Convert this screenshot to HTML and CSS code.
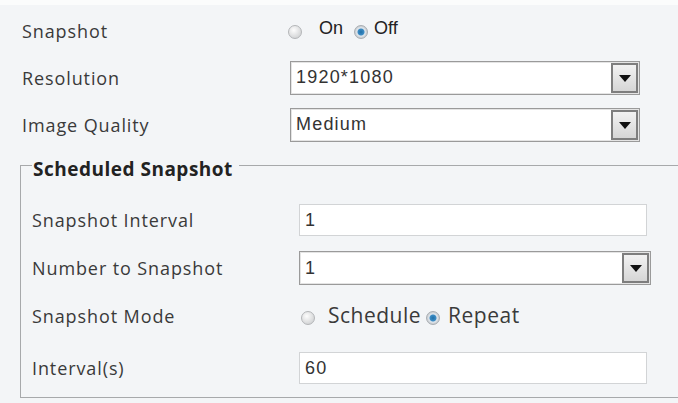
FILE: index.html
```html
<!doctype html>
<html lang="en">

<head>
  <meta charset="utf-8">
  <title>Snapshot</title>
  <link rel="stylesheet" href="styles.css">
</head>

<body>
  <div class="panel">
    <div class="row">
      <span class="label">Snapshot</span>
      <span class="radios plain">
        <span class="radio"></span><span class="opt on-opt">On</span>
        <span class="radio checked"></span><span class="opt">Off</span>
      </span>
    </div>
    <div class="row">
      <span class="label">Resolution</span>
      <span class="select"><span class="value">1920*1080</span><span class="arrow"></span></span>
    </div>
    <div class="row">
      <span class="label">Image Quality</span>
      <span class="select"><span class="value">Medium</span><span class="arrow"></span></span>
    </div>

    <fieldset class="group">
      <legend>Scheduled Snapshot</legend>
      <div class="row">
        <span class="label">Snapshot Interval</span>
        <span class="input"><span class="value">1</span></span>
      </div>
      <div class="row">
        <span class="label">Number to Snapshot</span>
        <span class="select wide"><span class="value">1</span><span class="arrow"></span></span>
      </div>
      <div class="row">
        <span class="label">Snapshot Mode</span>
        <span class="radios">
          <span class="radio"></span><span class="opt">Schedule</span>
          <span class="radio checked"></span><span class="opt">Repeat</span>
        </span>
      </div>
      <div class="row last">
        <span class="label">Interval(s)</span>
        <span class="input"><span class="value">60</span></span>
      </div>
    </fieldset>
  </div>
</body>

</html>
```

FILE: styles.css
```css
html { background-color:#f3f5f7; }
body { margin:0; border-top:5px solid #fbfcfc; font-family:"Open Sans",sans-serif; color:#3a3a3a; overflow:hidden; }
.panel { padding:2px 0 0 22px; }

.row { display:flex; align-items:center; height:47px; }
.label { width:268px; flex:none; font-size:18px; letter-spacing:.9px; }

.value { font-family:"Liberation Sans",Arial,sans-serif; font-size:18px; letter-spacing:1.2px; color:#333; padding-left:5px; flex:1; }

.select { display:flex; align-items:center; box-sizing:border-box; width:350px; height:34px; background:#fff; border:1px solid #9a9a9a; box-shadow:inset 0 0 0 1px #e4e4e4; }
.select.wide { width:352px; }
.arrow { position:relative; box-sizing:border-box; width:27px; height:30px; margin-right:1px; border:2px solid #7e7e7e; background:linear-gradient(#f2f2f2,#d6d6d6); }
.arrow:after { content:""; position:absolute; left:6px; top:10px; border-left:6px solid transparent; border-right:6px solid transparent; border-top:7px solid #111; }

.input { display:flex; align-items:center; box-sizing:border-box; width:348px; height:32px; background:#fff; border:1px solid #d2d4d6; }

.radios { display:flex; align-items:center; font-size:21px; letter-spacing:.5px; }
.radios.plain { font-family:"Liberation Sans",Arial,sans-serif; font-size:18px; letter-spacing:0; color:#222; }
.radio { box-sizing:border-box; width:14px; height:14px; border-radius:50%; border:1px solid #b3b5b8; background:radial-gradient(circle at 40% 35%,#fdfdfd,#c6c8ca); margin-right:13px; position:relative; top:2px; }
.radio.checked { background:radial-gradient(circle,#1f6fa8 0,#3d8cc4 3px,#e2e8ee 4px,#c8ccd0 6px); border-color:#a8adb2; margin-right:8px; }
.opt { margin-right:5px; position:relative; top:-1px; }
.radios .radio:first-child { margin-left:2px; }
.plain .radio:first-child { margin-left:-2px; }
.plain .radio { margin-right:17px; top:1px; }
.plain .radio.checked { margin-right:6px; }
.plain .on-opt { margin-right:11px; }
.plain .opt { top:-2px; }

.group { margin:0 0 0 -2px; padding:14px 0 5px 11px; border:1px solid #a7a9ab; border-right:0; }
.group legend { padding:8px 6px 0 1px; font-weight:bold; font-size:19px; letter-spacing:.5px; color:#222; }
.group .label { width:267px; }
.group .row { height:48px; }
.group .row.last { margin-top:4px; }
```
